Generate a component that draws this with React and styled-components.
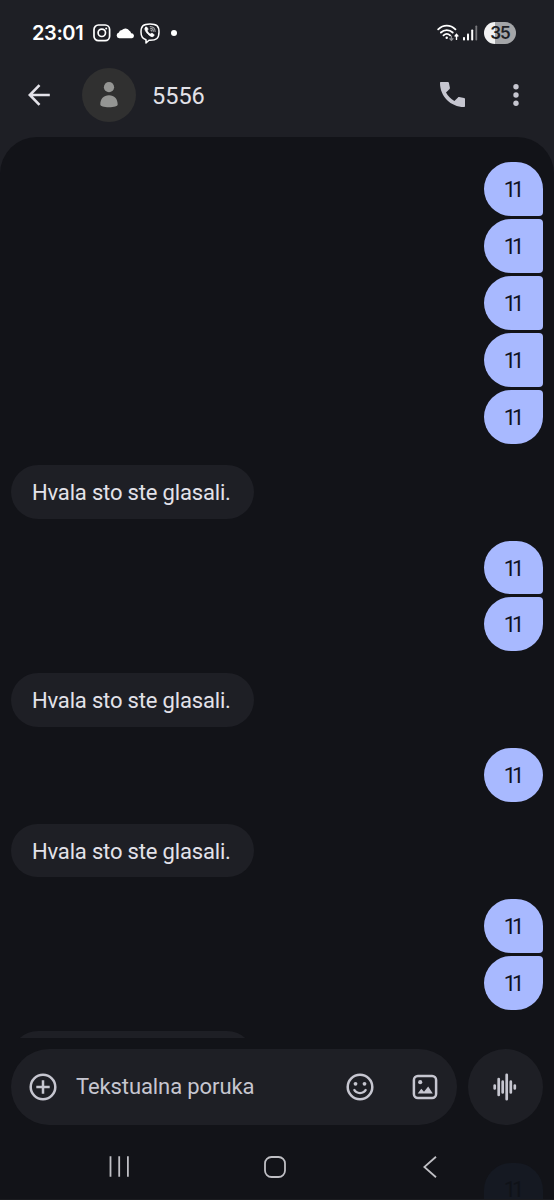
import React from "react";
import styled, { createGlobalStyle } from "styled-components";

const GlobalStyle = createGlobalStyle`
  * { box-sizing: border-box; }
  body {
    margin: 0;
    background: #121318;
    overflow: hidden;
  }
`;

const GROUPS = [
  { from: "me", texts: ["11", "11", "11", "11", "11"] },
  { from: "them", texts: ["Hvala sto ste glasali."] },
  { from: "me", texts: ["11", "11"] },
  { from: "them", texts: ["Hvala sto ste glasali."] },
  { from: "me", texts: ["11"] },
  { from: "them", texts: ["Hvala sto ste glasali."] },
  { from: "me", texts: ["11", "11"] },
  // only the top edge of this one shows above the composer
  { from: "them", texts: [""] },
];

const InstagramIcon = () => (
  <svg width="18" height="18" viewBox="0 0 18 18" fill="none" stroke="#fff">
    <rect x="1" y="1" width="15.6" height="15.6" rx="4.4" strokeWidth="1.7" />
    <circle cx="8.8" cy="8.8" r="3.7" strokeWidth="1.7" />
    <circle cx="13.2" cy="4.5" r="1" fill="#fff" stroke="none" />
  </svg>
);

const CloudIcon = () => (
  <svg width="19" height="12" viewBox="0 0 19 12" fill="#fff">
    <path d="M3.200 11.300a2.900 2.900 0 0 1-.3-5.700 3 3 0 0 1 3-2.600A4.600 4.600 0 0 1 13.400 3.700a3.200 3.200 0 0 1 1.700 2.500 2.600 2.600 0 0 1 .9 5.100z" />
  </svg>
);

const ViberIcon = () => (
  <svg width="20" height="21" viewBox="0 0 20 21" fill="none" stroke="#fff" strokeLinecap="round" strokeLinejoin="round">
    <path d="M10 .9c6.5 0 9 2 9 8.2s-2.5 8.2-9 8.200h-1L6 20v-3.200C2.300 15.800 1 13.500 1 9.100 1 2.900 3.500.9 10 .9z" strokeWidth="1.5" />
    <path d="M5.700 4.200c.8-.5 1.200-.2 2.200 1.600.4.8-.7 1.200-.6 1.900.5 1.600 1.500 2.700 3.100 3.300.8.100 1.100-1.100 2-.6 1.900 1.200 2 1.600 1.300 2.500-.9 1.200-2.100.9-4.200-.5C7.300 10.900 5.700 8.800 5 6.600c-.3-1 0-1.900.7-2.400z" fill="#fff" strokeWidth=".8" />
    <path d="M10.200 3.500c3 .2 4.800 2 4.900 5M10.500 5.300c1.800.2 2.800 1.200 2.900 3M10.700 7c.7.100 1 .4 1.100 1.100" strokeWidth="1.100" opacity=".6" />
  </svg>
);

const WifiIcon = () => (
  <svg width="22" height="18" viewBox="0 0 22 18" fill="none" stroke="#fff" strokeLinecap="round">
    <path d="M1.200 5.400c5-5 12.200-5 17.200 0M3.900 8.500c3.400-3.300 8.400-3.300 11.800 0M6.500 11.300c2-1.800 4.600-1.800 6.600 0" strokeWidth="1.800" />
    <circle cx="9.700" cy="13.700" r="1.200" fill="#fff" stroke="none" />
    <path d="M14.400 12.200v4M12.900 14.700l1.500 1.600 1.500-1.600" stroke="#8d8e92" strokeWidth="1.300" />
    <path d="M19.500 15.400v-4.600M18.100 12l1.400-1.600 1.400 1.600" strokeWidth="1.400" />
  </svg>
);

const SignalIcon = () => (
  <svg width="15" height="16" viewBox="0 0 15 16" fill="#fff">
    <rect x="0" y="12" width="2" height="3.500" rx=".8" />
    <rect x="4" y="8.500" width="2" height="7" rx=".8" />
    <rect x="8.200" y="4.500" width="2" height="11" rx=".8" />
    <rect x="12.400" y=".5" width="1.800" height="15" rx=".8" opacity=".4" />
  </svg>
);

const BackIcon = () => (
  <svg width="22" height="22" viewBox="0 0 22 22" fill="none" stroke="#e3e2e9" strokeWidth="2.600">
    <path d="M11.500 1.200 1.800 11l9.700 9.800M1.800 11h20" />
  </svg>
);

const PersonIcon = () => (
  <svg width="18" height="26" viewBox="0 0 18 26" fill="#949593">
    <circle cx="9" cy="5.200" r="5.100" />
    <path d="M.3 22.500C.3 17 3.600 13.300 9 13.300s8.700 3.700 8.700 9.200c0 1.700-3.500 2.700-8.700 2.700s-8.700-1-8.700-2.700z" />
  </svg>
);

const PhoneIcon = () => (
  <svg width="25" height="25" viewBox="0 0 25 25" fill="#c6c6d0">
    <path d="M1 0h6.900c.5 0 .9.300 1 .8l1 5c.1.400 0 .8-.3 1.100L6 10.500c1.900 3.500 4.800 6.500 8.400 8.500l3.600-3.600c.3-.3.700-.4 1.100-.3l5 1c.5.1.9.5.9 1V24c0 .6-.4 1-1 1C10.700 25 0 14.300 0 1c0-.6.4-1 1-1z" />
  </svg>
);

const MoreIcon = () => (
  <svg width="6" height="22" viewBox="0 0 6 22" fill="#c6c6d0">
    <circle cx="3" cy="2.800" r="2.700" />
    <circle cx="3" cy="11" r="2.700" />
    <circle cx="3" cy="19.200" r="2.700" />
  </svg>
);

const PlusIcon = () => (
  <svg width="28" height="28" viewBox="0 0 28 28" fill="none" stroke="#c6c6d0" strokeWidth="2.500">
    <circle cx="14" cy="14" r="12.300" />
    <path d="M14 7.300v13.400M7.300 14h13.400" />
  </svg>
);

const SmileIcon = () => (
  <svg width="28" height="28" viewBox="0 0 28 28" fill="none" stroke="#c6c6d0" strokeWidth="2.500">
    <circle cx="14" cy="14" r="12.300" />
    <path d="M7.900 16.300c2.400 5 9.800 5 12.200 0" strokeWidth="2.200" />
    <circle cx="9.500" cy="10.800" r="1.900" fill="#c6c6d0" stroke="none" />
    <circle cx="18.500" cy="10.800" r="1.900" fill="#c6c6d0" stroke="none" />
  </svg>
);

const ImageIcon = () => (
  <svg width="26" height="26" viewBox="0 0 26 26">
    <rect x="1.900" y="1.900" width="22.200" height="22.200" rx="4" fill="none" stroke="#c6c6d0" strokeWidth="2.500" />
    <circle cx="8.200" cy="8.200" r="2.100" fill="#c6c6d0" />
    <path d="M5.700 19.600 9.300 14.800l2.700 3 4.200-5.200 4.600 7z" fill="#c6c6d0" />
  </svg>
);

const VoiceIcon = () => (
  <svg width="24" height="28" viewBox="0 0 24 28" fill="none" stroke="#c6c6d0" strokeWidth="2.700" strokeLinecap="round">
    <path d="M1.700 12.500v3M5.700 6v16M9.700 8.700v10.800M13.700 1.800v24.400M17.800 8.700v10.800M21.800 12.500v3" />
  </svg>
);

const RecentsIcon = () => (
  <svg width="20" height="21" viewBox="0 0 20 21" fill="none" stroke="#bfbfc4" strokeWidth="1.800">
    <path d="M1.500 .3v20.400M10.200 .3v20.400M18.900 .3v20.400" />
  </svg>
);

const HomeIcon = () => (
  <svg width="22" height="22" viewBox="0 0 22 22" fill="none" stroke="#bfbfc4" strokeWidth="1.800">
    <rect x="1" y="1" width="20" height="20" rx="6.500" />
  </svg>
);

const NavBackIcon = () => (
  <svg width="14" height="22" viewBox="0 0 14 22" fill="none" stroke="#bfbfc4" strokeWidth="1.800">
    <path d="M13 .8 1.300 11 13 21.200" />
  </svg>
);

const App = () => {
  return (
    <Screen>
      <GlobalStyle />
      <StatusBar>
        <Clock>23:01</Clock>
        <Notifications>
          <InstagramIcon />
          <CloudIcon />
          <ViberIcon />
          <Dot />
        </Notifications>
        <Signals>
          <WifiIcon />
          <SignalIcon />
        </Signals>
        <Battery>35</Battery>
      </StatusBar>
      <Header>
        <BackIcon />
        <Avatar>
          <PersonIcon />
        </Avatar>
        <Title>5556</Title>
        <PhoneIcon />
        <MoreIcon />
      </Header>
      <Messages>
        {GROUPS.map((group, i) => (
          <Group key={i} $from={group.from}>
            {group.texts.map((text, j) => (
              <Bubble
                key={j}
                $from={group.from}
                $first={j === 0}
                $last={j === group.texts.length - 1}
              >
                {text}
              </Bubble>
            ))}
          </Group>
        ))}
      </Messages>
      <Composer>
        <InputBar>
          <PlusIcon />
          <Placeholder>Tekstualna poruka</Placeholder>
          <SmileIcon />
          <ImageIcon />
        </InputBar>
        <VoiceButton>
          <VoiceIcon />
        </VoiceButton>
      </Composer>
      <NavBar>
        <RecentsIcon />
        <HomeIcon />
        <NavBackIcon />
        <GhostBubble>11</GhostBubble>
      </NavBar>
    </Screen>
  );
};

const Screen = styled.div`
  display: flex;
  flex-direction: column;
  width: 554px;
  height: 1200px;
  overflow: hidden;
  background: #1e1f25;
  color: #e3e2e9;
  font-family: Roboto, "Liberation Sans", sans-serif;
`
const StatusBar = styled.div`
  display: flex;
  align-items: center;
  flex-shrink: 0;
  height: 66px;
  padding: 0 38px 0 32px;
`
const Clock = styled.div`
  width: 61px;
  color: #fff;
  font-family: Inter, sans-serif;
  font-size: 20px;
  font-weight: 600;
  letter-spacing: -0.4px;
  white-space: nowrap;
`
const Notifications = styled.div`
  display: flex;
  align-items: center;
  flex: 1;
  gap: 5px;
`
const Dot = styled.span`
  width: 6px;
  height: 6px;
  margin-left: 6px;
  border-radius: 50%;
  background: #fff;
`
const Signals = styled.div`
  display: flex;
  align-items: center;
  gap: 4px;
`
const Battery = styled.div`
  width: 32px;
  height: 22px;
  margin-left: 6px;
  border-radius: 11px;
  background: linear-gradient(to right, #f2f2f3 35%, #a4a5a8 35%);
  color: #1e1f25;
  font-family: Inter, sans-serif;
  font-size: 17px;
  font-weight: 600;
  letter-spacing: -1px;
  line-height: 22px;
  text-align: center;
`
const Header = styled.div`
  display: flex;
  align-items: center;
  flex-shrink: 0;
  height: 71px;
  padding: 0 35px 14px 28px;
`
const Avatar = styled.div`
  display: flex;
  align-items: center;
  justify-content: center;
  width: 54px;
  height: 54px;
  margin-left: 31.500px;
  border-radius: 50%;
  background: #303030;
`
const Title = styled.div`
  flex: 1;
  margin-left: 16.500px;
  padding-top: 2px;
  font-size: 23.500px;
  & + svg {
    margin-right: 48px;
  }
`
const Messages = styled.div`
  display: flex;
  flex-direction: column;
  gap: 21.500px;
  height: 901px;
  flex-shrink: 0;
  padding: 25.200px 11px 0;
  border-radius: 37px 37px 0 0;
  background: #121318;
  overflow: hidden;
`
const Group = styled.div`
  display: flex;
  flex-direction: column;
  flex-shrink: 0;
  gap: 3px;
  align-items: ${(props) => (props.$from === "me" ? "flex-end" : "flex-start")};
`
const Bubble = styled.div`
  width: ${(props) => (props.$from === "me" ? "59px" : "243px")};
  height: 53.900px;
  padding-left: ${(props) => (props.$from === "me" ? "0" : "21px")};
  border-radius: 27px;
  border-top-right-radius: ${(props) => (props.$first ? "27px" : "4px")};
  border-bottom-right-radius: ${(props) => (props.$last ? "27px" : "4px")};
  background: ${(props) => (props.$from === "me" ? "#a8b9ff" : "#1e1f25")};
  color: ${(props) => (props.$from === "me" ? "#10131f" : "#e3e2e9")};
  font-size: 22px;
  letter-spacing: ${(props) => (props.$from === "me" ? "-4px" : "-0.17px")};
  line-height: 55px;
  text-indent: ${(props) => (props.$from === "me" ? "-3px" : "0")};
  text-align: ${(props) => (props.$from === "me" ? "center" : "left")};
  white-space: nowrap;
`
const Composer = styled.div`
  display: flex;
  flex-shrink: 0;
  gap: 11px;
  height: 97px;
  padding: 11px 11px 0;
  background: #121318;
`
const InputBar = styled.div`
  display: flex;
  align-items: center;
  width: 446px;
  height: 76px;
  padding: 0 19px 0 18px;
  border-radius: 38px;
  background: #1e1f25;
`
const Placeholder = styled.div`
  flex: 1;
  margin-left: 19px;
  padding-bottom: 1px;
  color: #c6c6d0;
  font-size: 22px;
  letter-spacing: -0.1px;
  & + svg {
    margin-right: 38px;
  }
`
const VoiceButton = styled.div`
  display: flex;
  align-items: center;
  justify-content: center;
  width: 75px;
  height: 76px;
  padding-right: 1px;
  border-radius: 50%;
  background: #1e1f25;
`
const NavBar = styled.div`
  position: relative;
  display: flex;
  align-items: center;
  justify-content: space-between;
  flex-shrink: 0;
  height: 65px;
  padding: 0 117px 1px 109px;
  border-bottom: 1px solid #1b1c20;
  background: #121318;
  & > svg:nth-child(2) {
    margin-right: 3px;
  }
`
const GhostBubble = styled.div`
  position: absolute;
  right: 11px;
  bottom: 0;
  width: 59px;
  height: 36px;
  border-radius: 27px 27px 0 0;
  background: #151922;
  color: #0f1218;
  font-size: 22px;
  letter-spacing: -4px;
  line-height: 54px;
  text-align: center;
  text-indent: -3px;
  overflow: hidden;
`

export default App;
